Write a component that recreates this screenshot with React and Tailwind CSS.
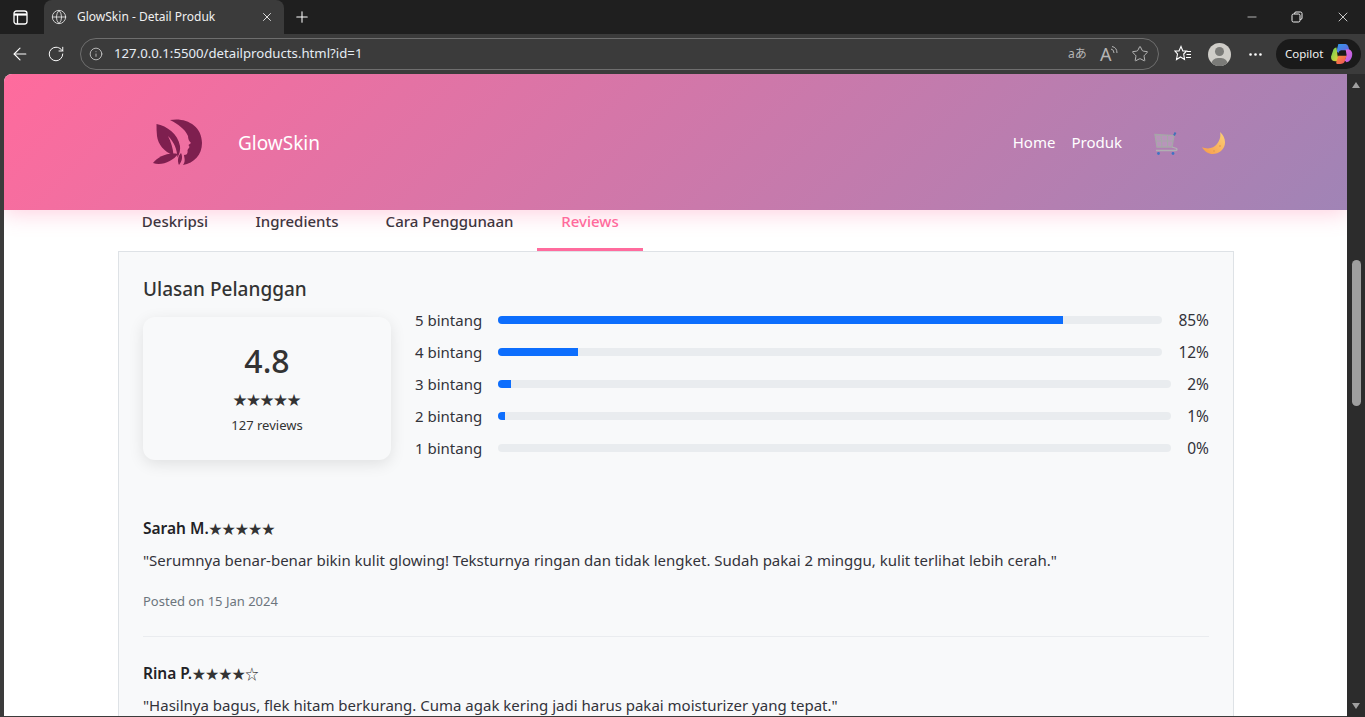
import { Globe, X, Plus, Minus, ArrowLeft, RotateCw, Info, Star, MoreHorizontal } from "lucide-react";

const font = { fontFamily: '"Noto Sans", "Noto Sans CJK JP", sans-serif' };

const tabs = [
  { label: "Deskripsi", width: "w-[114px]" },
  { label: "Ingredients", width: "w-[130px]" },
  { label: "Cara Penggunaan", width: "w-[175px]" },
  { label: "Reviews", width: "w-[106px]", active: true },
];

const ratings = [
  { label: "5 bintang", fill: "w-[85%]", pct: "85%" },
  { label: "4 bintang", fill: "w-[12%]", pct: "12%" },
  { label: "3 bintang", fill: "w-[2%]", pct: "2%" },
  { label: "2 bintang", fill: "w-[1%]", pct: "1%" },
  { label: "1 bintang", fill: "w-[0%]", pct: "0%" },
];

function LogoMark() {
  return (
    <svg width="50" height="47" viewBox="0 0 50 47" fill="#7e1f4f">
      <path d="M17 1 C32 -2 49 6 49 24 C49 36 41 44 30 46 C33 42 31 38 31 36 C34 36 35 34 34.5 31 L36.5 28 L35.5 26 L38 24 C36 22 35 20 35 17 C32 10 25 5 17 1 Z" />
      <path d="M3.5 5 C14 7 25 15 27 27 C27.5 31 26.5 35 24.5 38.5 C24 30 21 23 15 17 C18 23 20 29 20.5 36 C11 33 5 25 4 17 C3.5 13 3.5 9 3.5 5 Z" />
      <path d="M0 44 C5 38 14 33 25 35 C20 42 9 47 0 44 Z" />
      <path d="M28 34 C30 38 29 42 26 46 C24 42 25 37 28 34 Z" />
    </svg>
  );
}

function CartIcon() {
  return (
    <svg width="25" height="25" viewBox="0 0 25 25" fill="none">
      <path d="M1 3.5 L20 4.5 L18 16 L3 16 Z" fill="#c9bccb" fillOpacity="0.35" stroke="#a6a6a8" strokeWidth="1.3" />
      <path d="M7 4 L8 16 M13.5 4 L13.5 16 M2 10 H19" stroke="#a6a6a8" strokeWidth="1.1" />
      <path d="M20 4.5 L21.5 1.5" stroke="#4472b8" strokeWidth="2" />
      <path d="M18 16 L22.5 17.5 Q24 19.5 21 19.5 H2" stroke="#b0b0b2" strokeWidth="1.3" />
      <circle cx="4.5" cy="22.5" r="1.4" fill="#3f73c4" />
      <circle cx="19" cy="22.5" r="1.4" fill="#3f73c4" />
    </svg>
  );
}

function MoonIcon() {
  return (
    <svg width="24" height="25" viewBox="0 0 24 25">
      <defs>
        <linearGradient id="moon" x1="0" y1="1" x2="1" y2="0">
          <stop offset="0" stopColor="#f79a4a" />
          <stop offset="1" stopColor="#fcd277" />
        </linearGradient>
      </defs>
      <path d="M18 1 C24 6 25 15 19 20 C13 25 4 24 0 16 C6 19 12 17 15 13 C18 9 19 5 18 1 Z" fill="url(#moon)" />
      <circle cx="18" cy="15" r="1" fill="#e9a050" />
      <circle cx="12" cy="20" r="1" fill="#e9a050" />
    </svg>
  );
}

function CopilotIcon() {
  return (
    <svg width="22" height="22" viewBox="0 0 24 24">
      <defs>
        <linearGradient id="cpa" x1="0" y1="0" x2="1" y2="1">
          <stop offset="0" stopColor="#2f9be8" />
          <stop offset="1" stopColor="#6d5be0" />
        </linearGradient>
        <linearGradient id="cpb" x1="0" y1="0" x2="1" y2="1">
          <stop offset="0" stopColor="#e66bd8" />
          <stop offset="1" stopColor="#b05be6" />
        </linearGradient>
        <linearGradient id="cpc" x1="0" y1="0" x2="1" y2="1">
          <stop offset="0" stopColor="#5fd05a" />
          <stop offset="1" stopColor="#f5d02f" />
        </linearGradient>
        <linearGradient id="cpd" x1="0" y1="0" x2="1" y2="1">
          <stop offset="0" stopColor="#f9903c" />
          <stop offset="1" stopColor="#ef4c5c" />
        </linearGradient>
      </defs>
      <path d="M8 1 H16 Q18 1 19 4 L20 8 H11 Q9 8 8 11 L6 9 Z" fill="url(#cpa)" />
      <path d="M16 7 H20 Q24 9 23 14 Q22 20 17 21 L15 19 L17 13 Z" fill="url(#cpb)" />
      <path d="M6 5 Q3 5 2 9 L0 15 Q0 20 5 20 H9 L7 13 Z" fill="url(#cpc)" />
      <path d="M8 14 H17 L15 20 Q14 23 10 23 H7 Q5 23 6 20 Z" fill="url(#cpd)" />
    </svg>
  );
}

function BrowserChrome() {
  return (
    <div className="shrink-0 text-white">
      <div className="flex h-[34px] items-stretch bg-[#1f1f1f]">
        <div className="flex w-[44px] items-center justify-center pr-[4px]">
          <svg width="15" height="15" viewBox="0 0 15 15" fill="none" stroke="#ffffff" strokeWidth="1.3">
            <rect x="1" y="1" width="13" height="13" rx="2.5" />
            <path d="M1 4.5 H14" strokeWidth="2.2" />
            <path d="M4.5 4.5 V14" />
          </svg>
        </div>
        <div className="flex w-[240px] items-center rounded-t-lg bg-[#3b3b3b] pl-[7px] pr-[10px]">
          <Globe size={16} strokeWidth={1.3} className="text-[#e4e4e4]" />
          <span className="ml-[10px] flex-1 text-xs text-[#f0f0f0]">GlowSkin - Detail Produk</span>
          <X size={14} strokeWidth={1.6} className="text-[#e8e8e8]" />
        </div>
        <div className="flex w-[36px] items-center justify-center">
          <Plus size={18} strokeWidth={1.4} />
        </div>
        <div className="flex-1" />
        <div className="flex items-center gap-[32px] pr-[14px] text-[#f2f2f2]">
          <Minus size={14} strokeWidth={1.2} />
          <svg width="12" height="12" viewBox="0 0 12 12" fill="none" stroke="#f2f2f2" strokeWidth="1">
            <rect x="1" y="3" width="8" height="8" rx="1.5" />
            <path d="M3.5 3 V2.5 Q3.5 1 5 1 H9.5 Q11 1 11 2.5 V7 Q11 8.5 9.5 8.5 H9" />
          </svg>
          <X size={16} strokeWidth={1.2} />
        </div>
      </div>
      <div className="flex h-[40px] items-center bg-[#3b3b3b]">
        <div className="flex w-[80px] items-center pl-[10px]">
          <ArrowLeft size={20} strokeWidth={1.3} />
          <RotateCw size={18} strokeWidth={1.3} className="ml-[17px]" />
        </div>
        <div className="flex h-[32px] w-[1079px] items-center rounded-full border border-[#6e6e6e] pl-[8px] pr-[9px]">
          <Info size={14} strokeWidth={1.4} className="text-[#d0d0d0]" />
          <span className="ml-[11px] flex-1 text-[13.2px] text-[#e6ecf3]">127.0.0.1:5500/detailproducts.html?id=1</span>
          <span className="w-[24px] text-[12px] text-[#b5b5b5]">aあ</span>
          <span className="relative ml-[8px] w-[23px] text-[18px] leading-none text-[#b5b5b5]">
            A
            <svg className="absolute right-[5px] top-[1px]" width="8" height="9" viewBox="0 0 8 9" fill="none" stroke="#b5b5b5" strokeWidth="1">
              <path d="M1 3 Q4 3.5 4 7 M2 0.5 Q7 1.5 7 7" />
            </svg>
          </span>
          <Star size={18} strokeWidth={1.2} className="ml-[8px] text-[#c4c4c4]" />
        </div>
        <div className="ml-[15px] flex items-center">
          <svg width="18" height="18" viewBox="0 0 18 18" fill="none" stroke="#ffffff" strokeWidth="1.1">
            <path d="M7 1.5 L8.8 6 H12.5 L9.7 9 L10.5 14.5 L6.5 12 L2.5 14.5 L3.5 9 L1 6 H5 Z" />
            <path d="M13 6.5 H17 M12.5 9.5 H17 M12 12.5 H17" />
          </svg>
          <div className="relative ml-[16px] h-[23px] w-[23px] overflow-hidden rounded-full bg-[#cfcdc8]">
            <div className="absolute left-[7px] top-[4px] h-[9px] w-[9px] rounded-full bg-[#7b7b78]" />
            <div className="absolute left-[3px] top-[15px] h-[14px] w-[17px] rounded-full bg-[#7b7b78]" />
          </div>
          <MoreHorizontal size={17} strokeWidth={1.8} className="ml-[16px]" />
        </div>
        <div className="ml-[12px] flex h-[30px] w-[85px] items-center rounded-full bg-[#1a1a1a] pl-[9px]">
          <span className="text-[11.5px] text-[#f2f2f2]">Copilot</span>
          <span className="ml-[8px]"><CopilotIcon /></span>
        </div>
      </div>
    </div>
  );
}

function Header() {
  return (
    <header className="relative z-10 flex h-[136px] shrink-0 items-center bg-[linear-gradient(135deg,#ff6b9d_0%,#a084b6_100%)] pl-[149px] pr-[121px] shadow-[0_4px_20px_rgba(255,107,157,0.3)]">
      <LogoMark />
      <span className="ml-[35px] mt-[2px] flex-1 text-[19px] text-white">GlowSkin</span>
      <span className="text-[15px] text-white">Home</span>
      <span className="ml-[16px] text-[15px] text-white">Produk</span>
      <span className="ml-[32px] mt-[2px]"><CartIcon /></span>
      <span className="ml-[23px] mt-[3px]"><MoonIcon /></span>
    </header>
  );
}

function Tabs() {
  return (
    <div className="flex h-[41px] shrink-0 px-[114px]">
      {tabs.map((t) => (
        <div
          key={t.label}
          className={`flex justify-center border-b-[3px] text-[15px] font-medium leading-[22px] ${t.width} ${
            t.active ? "border-[#ff6b9d] text-[#ff6b9d]" : "border-transparent text-[#33333a]"
          }`}
        >
          {t.label}
        </div>
      ))}
    </div>
  );
}

function RatingSummary() {
  return (
    <div className="mt-1 flex gap-6">
      <div className="mt-[9px] flex h-[143px] w-[248px] shrink-0 flex-col items-center rounded-xl bg-[#f8f9fa] pt-[22px] shadow-[0_4px_15px_rgba(0,0,0,0.1)]">
        <div className="text-[32px] font-medium leading-[44px] text-[#333333]">4.8</div>
        <div className="mt-[5px] text-[13.5px] leading-[24px] text-[#333333]">★★★★★</div>
        <div className="mt-[3px] text-[13px] leading-[20px] text-[#333333]">127 reviews</div>
      </div>
      <div className="flex flex-1 flex-col gap-2">
        {ratings.map((r) => (
          <div key={r.label} className="flex h-6 items-center gap-4 text-[15px] text-[#33333a]">
            <span className="w-[67px] whitespace-nowrap">{r.label}</span>
            <div className="h-2 flex-1 overflow-hidden rounded-full bg-[#e9ecef]">
              <div className={`h-full bg-[#0d6efd] ${r.fill}`} />
            </div>
            <span className="pt-[2px] text-[15.5px]">{r.pct}</span>
          </div>
        ))}
      </div>
    </div>
  );
}

function ReviewName({ name, stars }) {
  return (
    <div className="text-[15.5px] font-semibold leading-6 text-[#222226]">
      {name}
      <span className="text-[13.3px] font-normal text-[#333333]">{stars}</span>
    </div>
  );
}

export default function App() {
  return (
    <div className="flex h-[717px] w-[1365px] flex-col overflow-hidden bg-[#3b3b3b]" style={font}>
      <BrowserChrome />
      <div className="flex min-h-0 flex-1">
        <main className="ml-1 mb-px flex min-w-0 flex-1 flex-col overflow-hidden rounded-tl-lg bg-white">
          <Header />
          <Tabs />
          <section className="ml-[114px] mr-[113px] flex-1 border border-[#dee2e6] bg-[#f8f9fa] px-6 pt-[22px]">
            <h2 className="text-[19px] font-medium leading-[30px] text-[#333333]">Ulasan Pelanggan</h2>
            <RatingSummary />
            <div className="mt-[56px] border-b border-[#eaecef] pb-[25px]">
              <ReviewName name="Sarah M." stars="★★★★★" />
              <p className="mt-[7px] text-[15px] leading-6 text-[#33333a]">
                "Serumnya benar-benar bikin kulit glowing! Teksturnya ringan dan tidak lengket. Sudah pakai 2 minggu, kulit terlihat lebih cerah."
              </p>
              <div className="mt-[19px] text-[13px] leading-5 text-[#6c757d]">Posted on 15 Jan 2024</div>
            </div>
            <div className="mt-[24px]">
              <ReviewName name="Rina P." stars="★★★★☆" />
              <p className="mt-[7px] text-[15px] leading-6 text-[#33333a]">
                "Hasilnya bagus, flek hitam berkurang. Cuma agak kering jadi harus pakai moisturizer yang tepat."
              </p>
            </div>
          </section>
        </main>
        <div className="flex w-[18px] shrink-0 flex-col items-center bg-[#2c2c2c] pt-[8px]">
          <div className="h-0 w-0 border-x-[4.5px] border-b-[6px] border-x-transparent border-b-[#a0a0a0]" />
          <div className="mt-[172px] h-[146px] w-[9px] rounded-full bg-[#9f9f9f]" />
          <div className="flex-1" />
          <div className="mb-[8px] h-0 w-0 border-x-[4.5px] border-t-[6px] border-x-transparent border-t-[#a0a0a0]" />
        </div>
      </div>
    </div>
  );
}
